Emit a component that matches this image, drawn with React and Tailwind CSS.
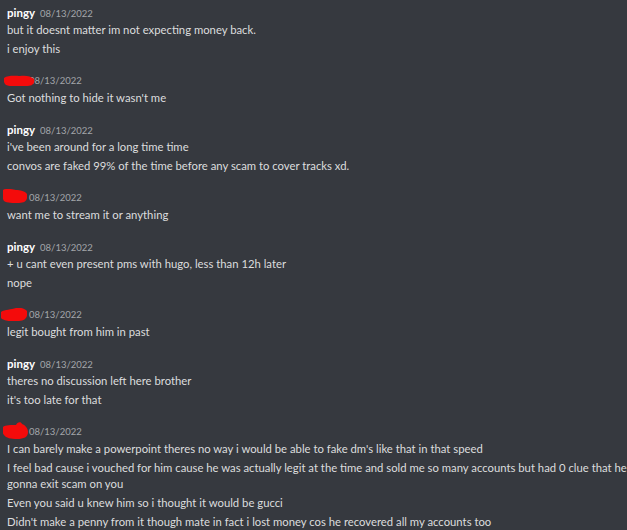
import React from 'react';

const groups = [
  { author: 'pingy', lines: ['but it doesnt matter im not expecting money back.', 'i enjoy this'] },
  { author: null, blob: 1, lines: ["Got nothing to hide it wasn't me"] },
  {
    author: 'pingy',
    lines: ["i've been around for a long time time", 'convos are faked 99% of the time before any scam to cover tracks xd.'],
  },
  { author: null, blob: 2, lines: ['want me to stream it or anything'] },
  { author: 'pingy', lines: ['+ u cant even present pms with hugo, less than 12h later', 'nope'] },
  { author: null, blob: 3, lines: ['legit bought from him in past'] },
  { author: 'pingy', lines: ['theres no discussion left here brother', "it's too late for that"] },
  {
    author: null,
    blob: 4,
    lines: [
      "I can barely make a powerpoint theres no way i would be able to fake dm's like that in that speed",
      [
        'I feel bad cause i vouched for him cause he was actually legit at the time and sold me so many accounts but had 0 clue that he was',
        'gonna exit scam on you',
      ],
      'Even you said u knew him so i thought it would be gucci',
      "Didn't make a penny from it though mate in fact i lost money cos he recovered all my accounts too",
    ],
  },
];

// red marker scribbles hiding the other user's name
const Blob = ({ kind }) => {
  const shapes = {
    1: 'M0 3 C4 0 12 1 16 1 C21 0 27 1 30 4 C31 8 29 11 22 11 C15 12 7 12 2 10 C0 8 -1 5 0 3 Z',
    2: 'M0 1 C3 -1 9 0 13 1 C17 1 22 2 24 5 C25 10 23 14 16 14 C10 14 4 14 1 12 C-1 9 -1 4 0 1 Z',
    3: 'M0 4 C4 1 10 2 15 0 C20 -1 24 1 26 3 C27 8 25 13 18 13 C11 14 5 13 1 11 C-1 9 -1 6 0 4 Z',
    4: 'M0 5 C2 3 9 3 13 3 C14 0 18 -1 19 2 C22 3 25 6 25 10 C25 15 21 17 14 17 C8 17 3 16 1 13 C-1 11 -1 7 0 5 Z',
  };
  const box = {
    1: 'left-[-3px] top-[0px] w-[30px] h-[11px]',
    2: 'left-[-4px] top-[-3px] w-[24px] h-[14px]',
    3: 'left-[-6px] top-[-1px] w-[26px] h-[13px]',
    4: 'left-[-4px] top-[-4px] w-[25px] h-[17px]',
  };
  const vb = { 1: '0 0 30 11', 2: '0 0 24 14', 3: '0 0 26 13', 4: '0 0 25 17' };
  return (
    <svg className={`absolute ${box[kind]}`} viewBox={vb[kind]} preserveAspectRatio="none">
      <path d={shapes[kind]} fill="#f40b0b" />
    </svg>
  );
};

const App = () => {
  return (
    <div className="w-full h-[530px] overflow-hidden bg-[#36393f] font-['Lato',sans-serif] text-[11.3px]">
      <div className="w-[700px] pl-[7px] pt-[5px]">
        {groups.map((g, i) => (
          <div key={i} className={i === 0 ? '' : 'mt-[16px]'}>
            <div className="flex items-baseline h-[16px] leading-[16px]">
              {g.author ? (
                <span className="text-white font-bold text-[11.5px] mr-[5px]">{g.author}</span>
              ) : (
                <span className="relative inline-block w-[17px] h-[12px] mr-[5px] self-center">
                  <Blob kind={g.blob} />
                </span>
              )}
              <span className="text-[#a3a6aa] text-[9.5px]">08/13/2022</span>
            </div>
            <div className="mt-[1px] flex flex-col gap-[3px] text-[#dcddde] leading-[16px]">
              {g.lines.map((l, j) =>
                Array.isArray(l) ? (
                  <div key={j}>
                    <div className="whitespace-nowrap">{l[0]}</div>
                    <div>{l[1]}</div>
                  </div>
                ) : (
                  <div key={j} className="whitespace-nowrap">{l}</div>
                )
              )}
            </div>
          </div>
        ))}
      </div>
    </div>
  );
};

export default App;
